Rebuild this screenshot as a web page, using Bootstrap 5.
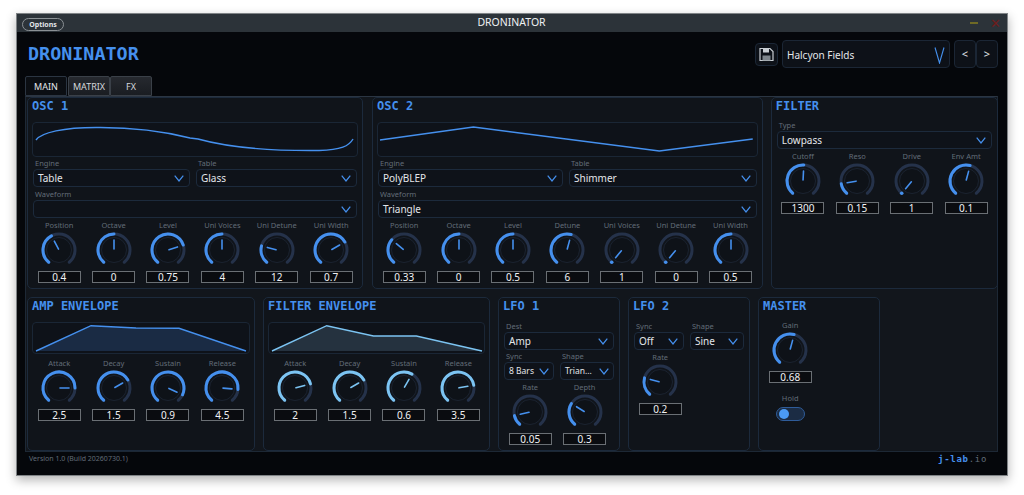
<!DOCTYPE html>
<html lang="en">
<head>
    <meta charset="UTF-8">
    <meta name="viewport" content="width=device-width, initial-scale=1.0">
    <title>Droninator</title>
    <link href="https://cdn.jsdelivr.net/npm/bootstrap@5.3.0/dist/css/bootstrap.min.css" rel="stylesheet">
    <style>
        html, body { height: 495px; overflow: hidden; }
        body {
            background-color: #fff;
            font-family: "Noto Sans", "Liberation Sans", sans-serif;
            color: #e3e6ea;
            --accent: #4590ee;
        }
        .synth-window {
            width: 992px;
            height: 463px;
            margin: 13px 0 0 16px;
            background-color: #05070b;
            border: 1px solid #7f8386;
            box-shadow: 0 4px 10px rgba(0, 0, 0, .3);
        }
        .title-bar { height: 18px; background-color: #2c3339; padding: 0 6px 0 5px; }
        .title-side { width: 120px; }
        .win-controls { gap: 12px; }
        .options-btn {
            width: 42px;
            height: 13px;
            padding: 0;
            font-size: 7px;
            font-weight: 700;
            line-height: 11px;
            color: #e3e6ea;
            border: 1px solid #8b9195;
        }
        .title-text { font-size: 10.5px; color: #eef0f2; }
        .win-min { width: 8px; height: 2px; background-color: #6f6a25; }
        .win-close { font-size: 13px; line-height: 13px; color: #6e1d1d; }

        .synth-head { height: 44px; padding: 0 9px 0 11px; }
        .logo {
            font-family: "DejaVu Sans Mono", monospace;
            font-weight: 700;
            font-size: 18.4px;
            color: var(--accent);
        }
        .save-btn, .preset-box, .step-btn {
            background-color: #0d1118;
            border: 1px solid #1b2635;
            border-radius: 4px;
        }
        .save-btn { width: 23px; height: 23px; padding: 0; margin-right: 4px; }
        .preset-box { width: 168px; height: 28px; padding: 2px 4px 0 4px; font-size: 10px; margin-right: 4px; }
        .step-btn { width: 22px; height: 28px; padding: 0; font-size: 11px; color: #e3e6ea; }

        .synth-tabs { margin-left: 8px; height: 20px; border: 0; }
        .synth-tabs .nav-link {
            width: 42px;
            height: 20px;
            padding: 0;
            margin: 0;
            font-size: 9px;
            line-height: 20px;
            text-align: center;
            color: #d5d8dc;
            background: linear-gradient(#26292f, #1a1d22);
            border: 1px solid #3a4048;
            border-radius: 2px 2px 0 0;
        }
        .synth-tabs .nav-link.active {
            color: #e3e6ea;
            background: #0b0e13;
            border-color: #2b3542;
            margin-right: 1px;
        }

        .panel-frame {
            height: 356px;
            margin: 0 9px 0 8px;
            padding-left: 1px;
            background-color: #12161c;
            border: 1px solid #1d2835;
            border-top-color: #2b3542;
        }
        .panel-row { gap: 8px; }
        .row-top { height: 192px; margin-bottom: 8px; }
        .row-bottom { height: 154px; }
        .synth-panel {
            padding: 0 4px;
            background-color: #10141a;
            border: 1px solid #1c2a3c;
            border-radius: 5px;
        }
        .panel-osc1 { width: 336px; margin-right: 1px; }
        .panel-osc2 { width: 391px; }
        .panel-env1 { width: 228px; }
        .panel-env2 { width: 227px; }
        .panel-small { width: 122px; }
        .panel-title {
            height: 16px;
            margin: 0 0 8px 0;
            font-family: "DejaVu Sans Mono", monospace;
            font-weight: 700;
            font-size: 12px;
            line-height: 16px;
            color: var(--accent);
        }
        .wave-box {
            height: 35px;
            background-color: #0e1219;
            border: 1px solid #1a2635;
            border-radius: 4px;
        }
        .wave-box.env-box { height: 32px; }
        .wave-box svg { display: block; width: 100%; height: 100%; }

        .field-label { height: 12px; font-size: 7.5px; line-height: 12px; color: #626c78; padding-left: 2px; }
        .field-row { gap: 6px; padding-left: 1px; padding-right: 1px; }
        .field-next { margin-top: 1px; }
        .filter-fields { margin-top: 5px; }
        .lfo-fields { margin-top: 6px; }
        .master-knobs { margin-top: 4px; }
        .hold-cell { margin-top: 8px; }
        .engine-osc1 { width: 157px; }
        .engine-osc2 { width: 185px; }
        .sync-field { width: 50px; }
        .field-select {
            height: 18px;
            padding: 0 5px 0 4px;
            font-size: 10px;
            background-color: #0e1219;
            border: 1px solid #1c2a3c;
            border-radius: 4px;
            min-width: 0;
        }
        .field-select svg { flex: none; }
        .field-narrow { font-size: 8.5px; padding-right: 4px; }

        .knob-cell { width: 54.4px; flex: none; }
        .env-knobs { margin-top: 2px; }
        .knob-label { height: 12px; font-size: 7.5px; line-height: 14px; color: #626c78; white-space: nowrap; }
        .knob-cell svg { display: block; }
        .knob-value {
            width: 43px;
            height: 12px;
            margin-top: 1px;
            font-size: 10px;
            line-height: 10px;
            text-align: center;
            color: #f1f2f4;
            background-color: #0a0c10;
            border: 1px solid #6a6f74;
        }
        .knob-track { fill: none; stroke: #25324a; stroke-width: 3; stroke-linecap: round; }
        .knob-arc { fill: none; stroke: var(--accent); stroke-width: 3; stroke-linecap: round; }
        .knob-dot { fill: var(--accent); }
        .knob-face { fill: #0e1218; stroke: #1b2330; }
        .knob-ptr { stroke: var(--accent); stroke-width: 1.6; stroke-linecap: round; }
        .light-blue { --accent: #7cc4f2; }
        .light-blue .panel-title { color: #4590ee; }

        .hold-toggle {
            width: 29px;
            height: 14px;
            margin-top: 4px;
            padding-left: 2px;
            background-color: #1b2c44;
            border: 1px solid #2f5c99;
        }
        .hold-thumb { width: 10px; height: 10px; background-color: #4b9bf5; }

        .synth-foot { height: 23px; padding: 0 20px 8px 12px; }
        .version-text { font-size: 7px; color: #626c78; }
        .jlab-text { font-family: "DejaVu Sans Mono", monospace; font-size: 9px; font-weight: 700; letter-spacing: .7px; color: #4590ee; }
        .jlab-text span { font-weight: 400; color: #626c78; }
    </style>
</head>
<body>

<svg width="0" height="0" class="position-absolute">
    <symbol id="chev" viewBox="0 0 10 7">
        <path d="M.7 .7 L5 6 L9.3 .7" fill="none" stroke="#4590ee" stroke-width="1.2"/>
    </symbol>
</svg>

<div class="synth-window d-flex flex-column">

    <!-- Title bar -->
    <div class="title-bar d-flex align-items-center justify-content-between">
        <div class="title-side"><button type="button" class="btn options-btn rounded-pill">Options</button></div>
        <div class="title-text">DRONINATOR</div>
        <div class="title-side win-controls d-flex align-items-center justify-content-end">
            <span class="win-min"></span><span class="win-close">&#10005;</span>
        </div>
    </div>

    <!-- Logo and presets -->
    <div class="synth-head d-flex align-items-center justify-content-between">
        <div class="logo">DRONINATOR</div>
        <div class="d-flex align-items-center">
            <button type="button" class="btn save-btn d-flex align-items-center justify-content-center">
                <svg width="15" height="15" viewBox="0 0 15 15">
                    <path d="M1 1.5 H11 L14 4.5 V13.5 H1 Z" fill="none" stroke="#c9ced3" stroke-width="1.2"/>
                    <rect x="4" y="1.5" width="6" height="4" fill="#c9ced3"/>
                    <rect x="3.5" y="8.5" width="8" height="5" fill="#7e858c"/>
                </svg>
            </button>
            <div class="preset-box d-flex align-items-center justify-content-between">
                <span>Halcyon Fields</span>
                <svg width="11" height="17" viewBox="0 0 11 17">
                    <path d="M1 .5 L5.5 16 L10 .5" fill="none" stroke="#4590ee" stroke-width="1.1"/>
                </svg>
            </div>
            <button type="button" class="btn step-btn">&lt;</button>
            <button type="button" class="btn step-btn">&gt;</button>
        </div>
    </div>

    <ul class="nav nav-tabs synth-tabs">
        <li class="nav-item"><a class="nav-link active" href="#">MAIN</a></li>
        <li class="nav-item"><a class="nav-link" href="#">MATRIX</a></li>
        <li class="nav-item"><a class="nav-link" href="#">FX</a></li>
    </ul>

    <div class="panel-frame">
        <div class="panel-row row-top d-flex">

            <section class="synth-panel panel-osc1">
                <h6 class="panel-title">OSC 1</h6>
                <div class="wave-box">
                    <svg viewBox="0 0 326 33" preserveAspectRatio="none">
                        <path d="M3 17 C8 10 30 4 68 4.5 C100 4.5 130 8 158 15 L166 16 C195 24 240 28 288 27.5 C310 27 318 23 322 16" fill="none" stroke="#4590ee" stroke-width="1.4"/>
                    </svg>
                </div>
                <div class="field-row d-flex">
                    <div class="engine-osc1">
                        <div class="field-label">Engine</div>
                        <div class="field-select d-flex align-items-center justify-content-between"><span>Table</span><svg width="10" height="7"><use href="#chev"/></svg></div>
                    </div>
                    <div class="flex-fill">
                        <div class="field-label">Table</div>
                        <div class="field-select d-flex align-items-center justify-content-between"><span>Glass</span><svg width="10" height="7"><use href="#chev"/></svg></div>
                    </div>
                </div>
                <div class="field-row field-next">
                    <div class="field-label">Waveform</div>
                    <div class="field-select d-flex align-items-center justify-content-end"><svg width="10" height="7"><use href="#chev"/></svg></div>
                </div>
                <div class="d-flex" id="osc1-knobs"></div>
            </section>

            <section class="synth-panel panel-osc2">
                <h6 class="panel-title">OSC 2</h6>
                <div class="wave-box">
                    <svg viewBox="0 0 381 33" preserveAspectRatio="none">
                        <path d="M2 17 L96 4 L283 28 L377 16" fill="none" stroke="#4590ee" stroke-width="1.4"/>
                    </svg>
                </div>
                <div class="field-row d-flex">
                    <div class="engine-osc2">
                        <div class="field-label">Engine</div>
                        <div class="field-select d-flex align-items-center justify-content-between"><span>PolyBLEP</span><svg width="10" height="7"><use href="#chev"/></svg></div>
                    </div>
                    <div class="flex-fill">
                        <div class="field-label">Table</div>
                        <div class="field-select d-flex align-items-center justify-content-between"><span>Shimmer</span><svg width="10" height="7"><use href="#chev"/></svg></div>
                    </div>
                </div>
                <div class="field-row field-next">
                    <div class="field-label">Waveform</div>
                    <div class="field-select d-flex align-items-center justify-content-between"><span>Triangle</span><svg width="10" height="7"><use href="#chev"/></svg></div>
                </div>
                <div class="d-flex" id="osc2-knobs"></div>
            </section>

            <section class="synth-panel flex-fill">
                <h6 class="panel-title mb-0">FILTER</h6>
                <div class="field-row filter-fields">
                    <div class="field-label">Type</div>
                    <div class="field-select d-flex align-items-center justify-content-between"><span>Lowpass</span><svg width="10" height="7"><use href="#chev"/></svg></div>
                </div>
                <div class="d-flex" id="filter-knobs"></div>
            </section>
        </div>

        <div class="panel-row row-bottom d-flex">
            <section class="synth-panel panel-env1">
                <h6 class="panel-title">AMP ENVELOPE</h6>
                <div class="wave-box env-box">
                    <svg viewBox="0 0 216 30" preserveAspectRatio="none">
                        <path d="M3 28 L58 2.7 L103 5 L146 5.3 L213 28 Z" fill="#1a2b44"/>
                        <path d="M3 28 L58 2.7 L103 5 L146 5.3 L213 28" fill="none" stroke="#4590ee" stroke-width="1.4"/>
                    </svg>
                </div>
                <div class="d-flex env-knobs" id="amp-knobs"></div>
            </section>

            <section class="synth-panel panel-env2 light-blue">
                <h6 class="panel-title">FILTER ENVELOPE</h6>
                <div class="wave-box env-box">
                    <svg viewBox="0 0 216 30" preserveAspectRatio="none">
                        <path d="M3 28 L58 2.7 L105 13 L148 13 L214 28 Z" fill="#25323f"/>
                        <path d="M3 28 L58 2.7 L105 13 L148 13 L214 28" fill="none" stroke="#7cc4f2" stroke-width="1.4"/>
                    </svg>
                </div>
                <div class="d-flex env-knobs" id="fenv-knobs"></div>
            </section>

            <section class="synth-panel panel-small">
                <h6 class="panel-title mb-0">LFO 1</h6>
                <div class="field-row lfo-fields">
                    <div class="field-label">Dest</div>
                    <div class="field-select d-flex align-items-center justify-content-between"><span>Amp</span><svg width="10" height="7"><use href="#chev"/></svg></div>
                </div>
                <div class="field-row d-flex">
                    <div class="sync-field">
                        <div class="field-label">Sync</div>
                        <div class="field-select field-narrow d-flex align-items-center justify-content-between"><span>8 Bars</span><svg width="10" height="7"><use href="#chev"/></svg></div>
                    </div>
                    <div class="flex-fill">
                        <div class="field-label">Shape</div>
                        <div class="field-select field-narrow d-flex align-items-center justify-content-between"><span>Trian...</span><svg width="10" height="7"><use href="#chev"/></svg></div>
                    </div>
                </div>
                <div class="d-flex" id="lfo1-knobs"></div>
            </section>

            <section class="synth-panel panel-small">
                <h6 class="panel-title mb-0">LFO 2</h6>
                <div class="field-row d-flex lfo-fields">
                    <div class="sync-field">
                        <div class="field-label">Sync</div>
                        <div class="field-select d-flex align-items-center justify-content-between"><span>Off</span><svg width="10" height="7"><use href="#chev"/></svg></div>
                    </div>
                    <div class="flex-fill">
                        <div class="field-label">Shape</div>
                        <div class="field-select d-flex align-items-center justify-content-between"><span>Sine</span><svg width="10" height="7"><use href="#chev"/></svg></div>
                    </div>
                </div>
                <div class="d-flex" id="lfo2-knobs"></div>
            </section>

            <section class="synth-panel panel-small">
                <h6 class="panel-title mb-0">MASTER</h6>
                <div class="master-knobs d-flex" id="master-knobs"></div>
                <div class="knob-cell hold-cell d-flex flex-column align-items-center">
                    <div class="knob-label">Hold</div>
                    <div class="hold-toggle rounded-pill d-flex align-items-center"><span class="hold-thumb rounded-circle"></span></div>
                </div>
            </section>
        </div>
    </div>

    <div class="synth-foot d-flex align-items-center justify-content-between">
        <div class="version-text">Version 1.0 (Build 20260730.1)</div>
        <div class="jlab-text">j-lab<span>.io</span></div>
    </div>
</div>

<script src="https://cdn.jsdelivr.net/npm/bootstrap@5.3.0/dist/js/bootstrap.bundle.min.js"></script>
<script>
    // label, value shown, pointer angle in degrees (-140 .. 140)
    const knobData = {
        'osc1-knobs': [['Position','0.4',-28],['Octave','0',0],['Level','0.75',72],['Uni Voices','4',0],['Uni Detune','12',-75],['Uni Width','0.7',60]],
        'osc2-knobs': [['Position','0.33',-50],['Octave','0',0],['Level','0.5',0],['Detune','6',15],['Uni Voices','1',-140],['Uni Detune','0',-140],['Uni Width','0.5',0]],
        'filter-knobs': [['Cutoff','1300',3],['Reso','0.15',-100],['Drive','1',-140],['Env Amt','0.1',15]],
        'amp-knobs': [['Attack','2.5',90],['Decay','1.5',60],['Sustain','0.9',115],['Release','4.5',95]],
        'fenv-knobs': [['Attack','2',75],['Decay','1.5',60],['Sustain','0.6',30],['Release','3.5',80]],
        'lfo1-knobs': [['Rate','0.05',-103],['Depth','0.3',-58]],
        'lfo2-knobs': [['Rate','0.2',-75]],
        'master-knobs': [['Gain','0.68',15]]
    };

    function polar(r, deg) {
        const a = deg * Math.PI / 180;
        return (20 + r * Math.sin(a)).toFixed(2) + ' ' + (20 - r * Math.cos(a)).toFixed(2);
    }

    function arc(r, from, to) {
        const large = to - from > 180 ? 1 : 0;
        return `M${polar(r, from)} A${r} ${r} 0 ${large} 1 ${polar(r, to)}`;
    }

    function knobHtml([label, value, angle]) {
        const atStart = angle <= -140;
        const start = polar(16, -140).split(' ');
        const fill = atStart
            ? `<circle class="knob-dot" cx="${start[0]}" cy="${start[1]}" r="1.8"/>`
            : `<path class="knob-arc" d="${arc(16, -140, angle)}"/>`;
        return `
            <div class="knob-cell d-flex flex-column align-items-center">
                <div class="knob-label">${label}</div>
                <svg width="40" height="40" viewBox="0 0 40 40">
                    <path class="knob-track" d="${arc(16, -140, 140)}"/>
                    ${fill}
                    <circle class="knob-face" cx="20" cy="20" r="12.5"/>
                    <path class="knob-ptr" d="M${polar(1, angle)} L${polar(10, angle)}"/>
                </svg>
                <div class="knob-value">${value}</div>
            </div>`;
    }

    for (const id in knobData) {
        document.getElementById(id).innerHTML = knobData[id].map(knobHtml).join('');
    }
</script>
</body>
</html>
